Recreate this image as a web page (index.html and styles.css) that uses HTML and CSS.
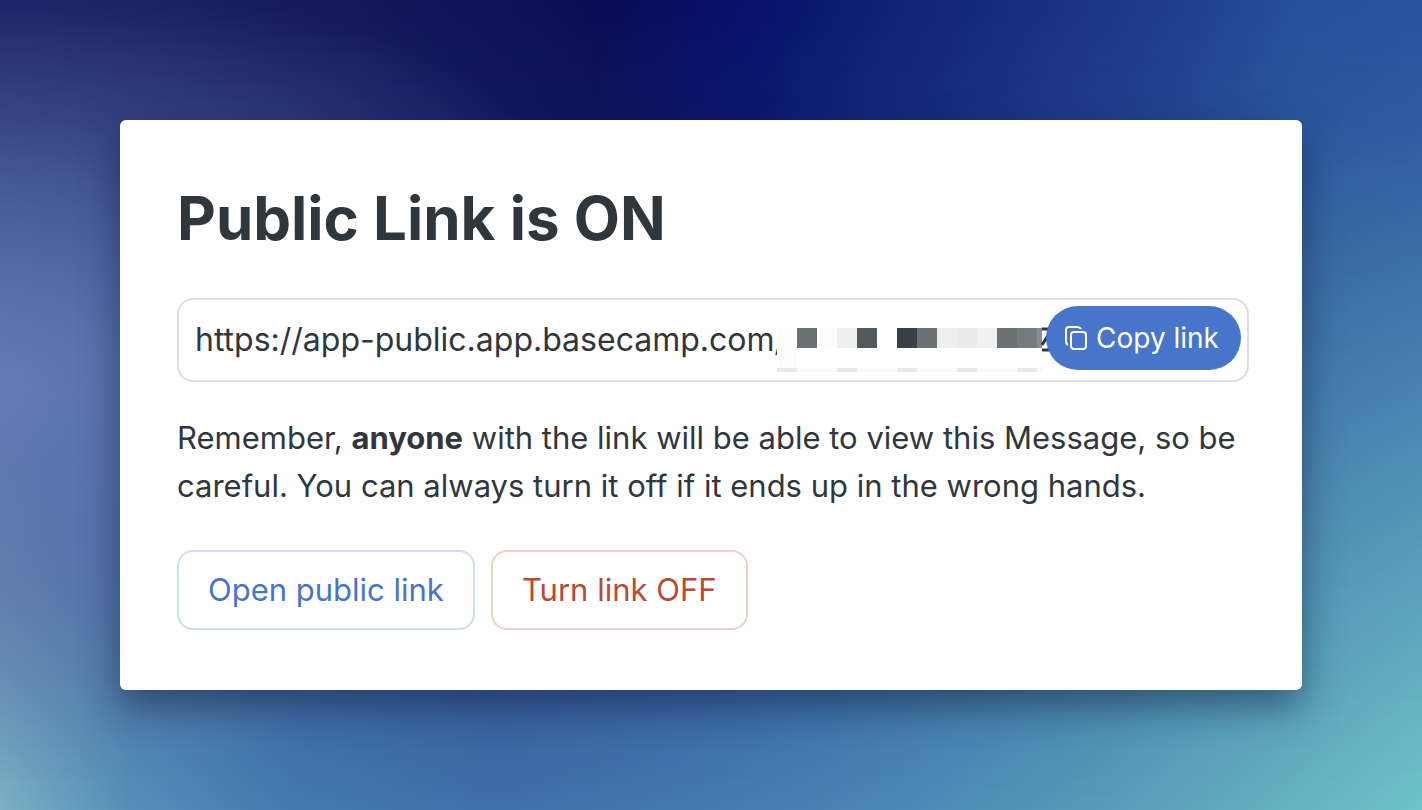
FILE: index.html
```html
<!DOCTYPE html>
<html lang="en">
<head>
<meta charset="utf-8">
<meta name="viewport" content="width=device-width, initial-scale=1">
<title>Public Link</title>
<link rel="stylesheet" href="styles.css">
</head>
<body class="page">
<main class="card">
  <h1 class="title">Public Link is ON</h1>
  <div class="link-field">
    <input class="link-input" type="text" aria-label="Public link" value="https://app-public.app.basecamp.com/" readonly>
    <svg class="redaction" viewBox="0 -6 276 56" aria-hidden="true" shape-rendering="crispEdges">
      <path fill="#fcfcfc" d="M0 0h20v42H0zM40 0h20v20H40z"/>
      <path fill="#6c7174" d="M20 0h20v20H20zM140 0h20v20h-20zM220 0h20v20h-20z"/>
      <path fill="#eef0f0" d="M60 0h20v20H60zM160 0h20v20h-20z"/>
      <path fill="#53595d" d="M80 0h20v20H80z"/>
      <path fill="#383f47" d="M120 0h20v20h-20z"/>
      <path fill="#ebebeb" d="M180 0h20v20h-20z"/>
      <path fill="#f1f1f1" d="M200 0h20v20h-20z"/>
      <path fill="#767b7f" d="M240 0h20v20h-20z"/>
      <path fill="#8a8c95" d="M260 0h5v20h-5z"/>
      <path fill="#fafafa" d="M0 40h265v4H0z"/>
      <path fill="#e9e9e9" d="M0 40h20v4H0zM60 40h20v4H60zM120 40h20v4h-20zM180 40h20v4h-20zM240 40h20v4h-20z"/>
      <path fill="none" stroke="#2f373d" stroke-width="3" shape-rendering="auto" d="M265 1h10L265 17M265 22h10"/>
    </svg>
    <button class="copy" type="button">
      <svg class="copy-icon" viewBox="0 0 24 26" aria-hidden="true" fill="none" stroke="currentColor" stroke-width="2">
        <rect x="7" y="7" width="15" height="17" rx="3"/>
        <path d="M4 20Q2 19 2 16V5Q2 2 5 2H13Q16 2 17 4"/>
      </svg>
      Copy link
    </button>
  </div>
  <p class="note">Remember, <strong>anyone</strong> with the link will be able to view this Message, so be careful. You can always turn it off if it ends up in the wrong hands.</p>
  <div class="actions">
    <a class="action action-open" href="#">Open public link</a>
    <button class="action action-off" type="button">Turn link OFF</button>
  </div>
</main>
</body>
</html>
```
FILE: styles.css
```css
* { box-sizing: border-box; }
.page {
  margin: 0;
  min-height: 100vh;
  padding: 120px;
  position: relative;
  isolation: isolate;
  font-family: Inter, "Liberation Sans", sans-serif;
  font-size: 31px;
  line-height: 48px;
  color: #2f373d;
  background: linear-gradient(90deg, #1b2064 0%, #16195c 25%, #0b0c55 42%, #07106a 52%, #13267a 66%, #1d3a8a 80%, #28509a 92%, #2b539e 100%);
}
/* Lighter tones that rise from the lower edge of the backdrop */
.page::before {
  content: "";
  position: absolute;
  inset: 0;
  z-index: -2;
  background: linear-gradient(90deg, #7cb0c6 0%, #5590b8 9%, #4379b0 21%, #406fac 35%, #4479b2 49%, #4b88b5 63%, #569bb9 77%, #65b3c1 91%, #6fc3c9 100%);
  mask-image: linear-gradient(to bottom, transparent, rgba(0, 0, 0, .07) 15%, #000);
}
/* Soft violet glow at the left side */
.page::after {
  content: "";
  position: absolute;
  inset: 0;
  z-index: -1;
  background: radial-gradient(ellipse 50% 50% at 0% 47%, rgba(104, 128, 186, .85) 0%, rgba(96, 120, 180, .5) 50%, rgba(80, 104, 172, 0) 100%);
}
.card {
  padding: 66px 53px 60px 57px;
  border-radius: 6px;
  background: #fff;
  box-shadow: 0 16px 36px rgba(15, 25, 55, .5);
}
.title { margin: 0 0 48px; font-size: 60px; line-height: 64px; font-weight: 700; }
.link-field {
  display: flex;
  align-items: flex-start;
  height: 84px;
  padding: 6px 6px 0 16px;
  border: 2px solid #dfdfdf;
  border-radius: 16px;
  position: relative;
}
.link-input {
  flex: 1;
  min-width: 0;
  height: 66px;
  padding: 0;
  border: 0;
  outline: 0;
  font: inherit;
  font-size: 32px;
  color: inherit;
  background: transparent;
}
.redaction { position: absolute; right: 194px; top: 22px; width: 276px; height: 56px; background: #fff; }
.copy {
  display: flex;
  align-items: center;
  gap: 8px;
  height: 64px;
  padding: 0 22px 0 18px;
  border: 0;
  border-radius: 32px;
  font: inherit;
  font-size: 28px;
  white-space: nowrap;
  color: #fff;
  background: #4675cb;
  position: relative;
}
.copy-icon { width: 24px; height: 26px; }
.note { margin: 32px 0 40px; }
.actions { display: flex; gap: 16px; }
.action {
  display: flex;
  align-items: center;
  height: 80px;
  padding: 0 29px;
  border: 2px solid;
  border-radius: 16px;
  font: inherit;
  text-decoration: none;
  background: #fff;
}
.action-open { color: #4675cb; border-color: #cfddf3; }
.action-off { color: #b94935; border-color: #efd0ca; }
```
